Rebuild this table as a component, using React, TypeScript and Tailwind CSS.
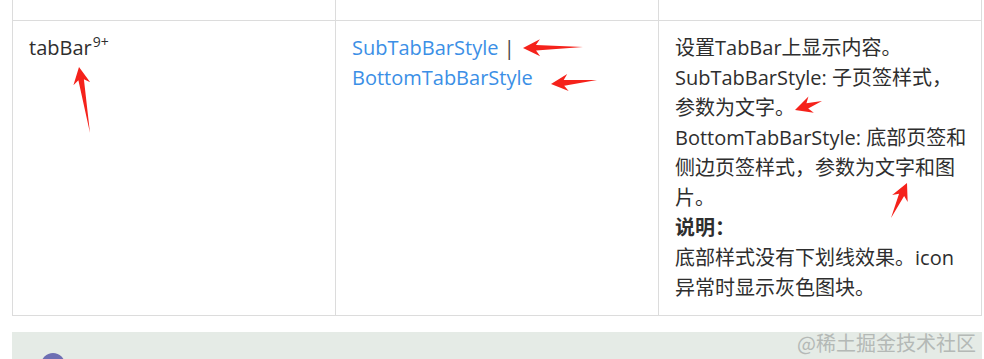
const Arrow = ({ x1, y1, x2, y2 }: { x1: number; y1: number; x2: number; y2: number }) => {
  // tail (x1,y1) -> tip (x2,y2), tapered red annotation arrow
  const dx = x2 - x1;
  const dy = y2 - y1;
  const len = Math.sqrt(dx * dx + dy * dy);
  const ux = dx / len;
  const uy = dy / len;
  const px = -uy;
  const py = ux;
  const headLen = 17;
  const headW = 8.5;
  const shaftW = 2.8;
  const bx = x2 - ux * headLen;
  const by = y2 - uy * headLen;
  const nx = x2 - ux * (headLen - 4);
  const ny = y2 - uy * (headLen - 4);
  const pts = [
    [x1, y1],
    [nx + px * shaftW, ny + py * shaftW],
    [bx + px * headW, by + py * headW],
    [x2, y2],
    [bx - px * headW, by - py * headW],
    [nx - px * shaftW, ny - py * shaftW],
  ]
    .map((p) => p.join(","))
    .join(" ");
  return <polygon points={pts} fill="#f5221b" />;
};

export default function App() {
  return (
    <div
      className="relative w-[984px] h-[359px] overflow-hidden bg-white text-[20px] text-[#2e2e2e]"
      style={{ fontFamily: '"Open Sans", "Noto Sans CJK SC", sans-serif' }}
    >
      <div className="ml-3 w-[970px] border-l border-[#dcdcdc]">
        {/* previous row, mostly scrolled off */}
        <div className="grid grid-cols-3 h-[21px] border-b border-[#dcdcdc]">
          <div className="border-r border-[#dcdcdc]" />
          <div className="border-r border-[#dcdcdc]" />
          <div className="border-r border-[#dcdcdc] overflow-hidden px-4">
            <div className="-mt-[25px] leading-[30px] whitespace-nowrap">为其上的切换动画样式效果。</div>
          </div>
        </div>

        {/* tabBar row */}
        <div className="grid grid-cols-3 h-[295px] border-b border-[#dcdcdc] leading-[30px]">
          <div className="border-r border-[#dcdcdc] px-4 py-3">
            tabBar<span className="relative -top-[8px] ml-px text-[14px]">9+</span>
          </div>
          <div className="border-r border-[#dcdcdc] px-4 py-3">
            <span className="text-[#3b8fe6]">SubTabBarStyle</span> <span className="text-[#444]">|</span>
            <br />
            <span className="text-[#3b8fe6]">BottomTabBarStyle</span>
          </div>
          <div className="border-r border-[#dcdcdc] pl-4 pr-3 py-3">
            <div>设置TabBar上显示内容。</div>
            <div>SubTabBarStyle: 子页签样式，参数为文字。</div>
            <div>BottomTabBarStyle: 底部页签和侧边页签样式，参数为文字和图片。</div>
            <div className="font-bold">说明：</div>
            <div>底部样式没有下划线效果。icon异常时显示灰色图块。</div>
          </div>
        </div>
      </div>

      {/* next note panel */}
      <div className="ml-3 mt-4 w-[970px] h-[40px] bg-[#e5ebe6] pl-[29px] pt-[21px]">
        <div className="w-6 h-6 rounded-full bg-[#6e6fb3]" />
      </div>

      {/* watermark */}
      <div
        className="absolute right-[8px] top-[330px] text-[20px] leading-[26px] text-[#b4b9b6]"
        style={{ fontFamily: '"Noto Sans CJK SC", sans-serif' }}
      >
        @稀土掘金技术社区
      </div>

      {/* annotation arrows */}
      <svg className="absolute inset-0 pointer-events-none" width="984" height="359">
        <Arrow x1={90} y1={133} x2={79} y2={67} />
        <Arrow x1={583} y1={47} x2={523} y2={48} />
        <Arrow x1={597} y1={80} x2={551} y2={84} />
        <Arrow x1={822} y1={101} x2={795} y2={110} />
        <Arrow x1={891} y1={218} x2={907} y2={183} />
      </svg>
    </div>
  );
}
